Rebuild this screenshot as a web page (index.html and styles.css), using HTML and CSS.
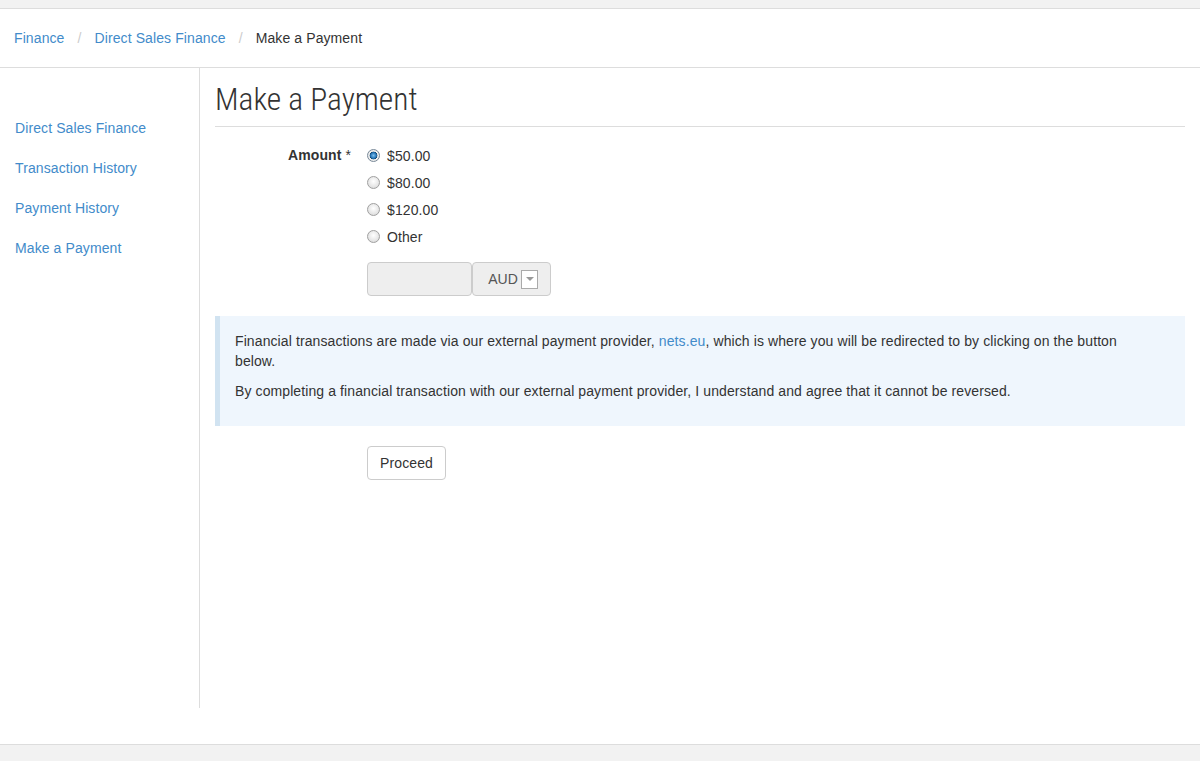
FILE: index.html
```html
<!DOCTYPE html>
<html lang="en">
<head>
    <meta charset="UTF-8">
    <title>Make a Payment</title>
    <link rel="stylesheet" href="styles.css">
</head>
<body>
    <div class="top-strip"></div>
    <div class="header">
        <ul class="breadcrumb">
            <li><a href="#">Finance</a></li>
            <li class="sep">/</li>
            <li><a href="#">Direct Sales Finance</a></li>
            <li class="sep">/</li>
            <li class="active">Make a Payment</li>
        </ul>
    </div>

    <div class="page">
        <div class="sidebar">
            <a href="#">Direct Sales Finance</a>
            <a href="#">Transaction History</a>
            <a href="#">Payment History</a>
            <a href="#">Make a Payment</a>
        </div>

        <div class="main">
            <h1>Make a Payment</h1>
            <form onsubmit="event.preventDefault();">
                <div class="form-row">
                    <label class="field-label">Amount <span class="required">*</span></label>
                    <div class="field">
                        <label class="radio"><input type="radio" name="amount" checked> $50.00</label>
                        <label class="radio"><input type="radio" name="amount"> $80.00</label>
                        <label class="radio"><input type="radio" name="amount"> $120.00</label>
                        <label class="radio"><input type="radio" name="amount"> Other</label>
                        <div class="input-group">
                            <input type="text" class="other-input" disabled>
                            <div class="currency">AUD <span class="arrow-box"><span class="arrow"></span></span></div>
                        </div>
                    </div>
                </div>

                <div class="info-box">
                    <p>Financial transactions are made via our external payment provider, <a href="#">nets.eu</a>, which is where you will be redirected to by clicking on the button below.</p>
                    <p>By completing a financial transaction with our external payment provider, I understand and agree that it cannot be reversed.</p>
                </div>

                <div class="actions">
                    <button type="submit" class="proceed-button">Proceed</button>
                </div>
            </form>
        </div>
    </div>

    <div class="footer"></div>
</body>
</html>
```

FILE: styles.css
```css
body {
    margin: 0;
    font-family: "Liberation Sans", Arial, sans-serif;
    font-size: 14px;
    line-height: 20px;
    letter-spacing: 0.1px;
    color: #333;
    background-color: #fff;
}
a {
    color: #428bca;
    text-decoration: none;
}
.top-strip {
    height: 8px;
    background-color: #f2f2f2;
    border-bottom: 1px solid #ddd;
}
.header {
    height: 58px;
    border-bottom: 1px solid #ddd;
    display: flex;
    align-items: center;
}
.breadcrumb {
    list-style: none;
    margin: 0;
    padding: 0 14px;
    display: flex;
}
.breadcrumb .sep {
    color: #ccc;
    padding: 0 13px;
}
.breadcrumb .active {
    color: #333;
}
.page {
    display: flex;
    height: 640px;
}
.sidebar {
    width: 199px;
    border-right: 1px solid #ddd;
    padding-top: 40px;
    display: flex;
    flex-direction: column;
}
.sidebar a {
    padding: 10px 15px;
}
.main {
    flex: 1;
    padding: 0 15px;
}
h1 {
    font-family: Roboto, sans-serif;
    font-weight: 300;
    font-size: 31.5px;
    font-stretch: 85%;
    line-height: 34px;
    letter-spacing: 0;
    margin: 15px 0 0;
    padding-bottom: 9px;
    border-bottom: 1px solid #ddd;
    color: #333;
}
form {
    margin-top: 15px;
}
.form-row {
    display: flex;
}
.field-label {
    width: 136px;
    padding-right: 16px;
    text-align: right;
    font-weight: bold;
    line-height: 27px;
}
.required {
    font-weight: normal;
}
.radio {
    display: flex;
    align-items: center;
    height: 27px;
}
.radio input {
    appearance: none;
    -webkit-appearance: none;
    width: 13px;
    height: 13px;
    margin: 0 7px 0 0;
    border-radius: 50%;
    border: 1px solid #a0a0a0;
    background: radial-gradient(circle at 50% 40%, #fff 0%, #e6e6e6 60%, #d2d2d2 100%);
}
.radio input:checked {
    border-color: #7a8a99;
    background: radial-gradient(circle, #7fc0ee 0, #1f6fb2 3px, #16476f 3.6px, #f2f2f2 4.2px, #d8d8d8 100%);
}
.input-group {
    display: flex;
    margin-top: 12px;
}
.other-input {
    width: 105px;
    height: 34px;
    box-sizing: border-box;
    border: 1px solid #ccc;
    border-radius: 4px;
    background-color: #eee;
    margin: 0;
}
.currency {
    width: 79px;
    height: 34px;
    box-sizing: border-box;
    border: 1px solid #ccc;
    border-radius: 4px;
    background-color: #eee;
    display: flex;
    align-items: center;
    justify-content: flex-end;
    padding-right: 12px;
    gap: 3px;
    color: #555;
}
.arrow-box {
    width: 15px;
    height: 17px;
    border: 1px solid #aaa;
    background-color: #fff;
    display: flex;
    align-items: center;
    justify-content: center;
}
.arrow {
    width: 0;
    height: 0;
    border-left: 4px solid transparent;
    border-right: 4px solid transparent;
    border-top: 4px solid #999;
}
.info-box {
    margin-top: 20px;
    padding: 15px 45px 15px 15px;
    background-color: #eff6fd;
    border-left: 5px solid #d1e3f1;
}
.info-box p {
    margin: 0 0 10px;
}
.actions {
    margin-top: 20px;
    padding-left: 152px;
}
.proceed-button {
    font-family: "Liberation Sans", Arial, sans-serif;
    font-size: 14px;
    line-height: 20px;
    letter-spacing: 0.1px;
    padding: 6px 12px;
    width: 79px;
    height: 34px;
    color: #333;
    background-color: #fff;
    border: 1px solid #ccc;
    border-radius: 4px;
    cursor: pointer;
}
.footer {
    margin-top: 36px;
    height: 16px;
    background-color: #f2f2f2;
    border-top: 1px solid #ddd;
}
```
